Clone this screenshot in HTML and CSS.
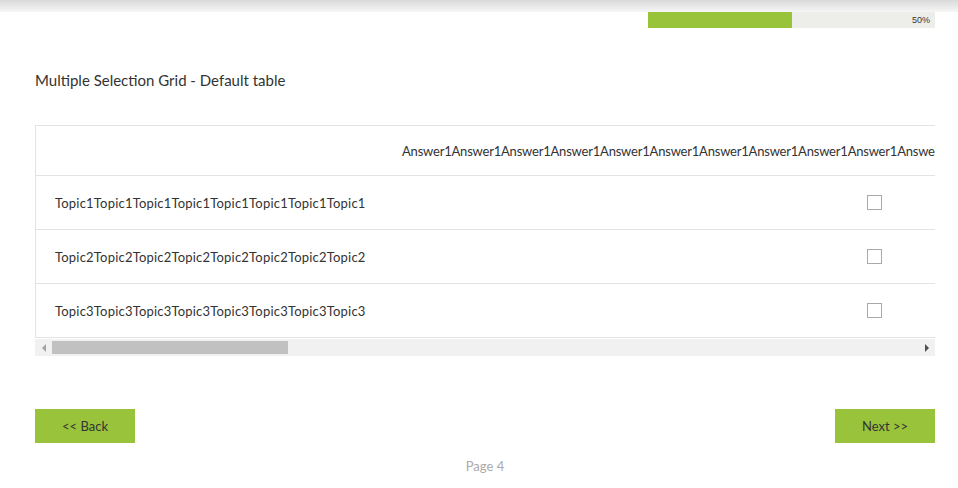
FILE: index.html
```html
<!DOCTYPE html>
<html>
<head>
  <meta charset="UTF-8">
  <title>Multiple Selection Grid</title>
  <link rel="stylesheet" href="styles.css">
</head>
<body>
  <div class="topbar"></div>

  <div class="progress-row">
    <div class="progress">
      <div class="progress-fill" style="width: 50%;"></div>
      <span class="progress-label">50%</span>
    </div>
  </div>

  <main class="survey">
    <h2 class="question-title">Multiple Selection Grid - Default table</h2>

    <div class="grid-scroll">
      <table class="grid">
        <thead>
          <tr>
            <th class="topic-col"></th>
            <th>Answer1Answer1Answer1Answer1Answer1Answer1Answer1Answer1Answer1Answer1Answer1Answer1Answer1Answer1Answer1Answer1Answer1Answer1Answer1</th>
            <th>Answer2Answer2Answer2Answer2Answer2Answer2Answer2Answer2Answer2Answer2Answer2Answer2Answer2Answer2Answer2Answer2Answer2Answer2Answer2</th>
            <th>Answer3Answer3Answer3Answer3Answer3Answer3Answer3Answer3Answer3Answer3Answer3Answer3Answer3Answer3Answer3Answer3Answer3Answer3Answer3</th>
          </tr>
        </thead>
        <tbody>
          <tr>
            <td class="topic">Topic1Topic1Topic1Topic1Topic1Topic1Topic1Topic1</td>
            <td><input type="checkbox" class="box"></td>
            <td><input type="checkbox" class="box"></td>
            <td><input type="checkbox" class="box"></td>
          </tr>
          <tr>
            <td class="topic">Topic2Topic2Topic2Topic2Topic2Topic2Topic2Topic2</td>
            <td><input type="checkbox" class="box"></td>
            <td><input type="checkbox" class="box"></td>
            <td><input type="checkbox" class="box"></td>
          </tr>
          <tr>
            <td class="topic">Topic3Topic3Topic3Topic3Topic3Topic3Topic3Topic3</td>
            <td><input type="checkbox" class="box"></td>
            <td><input type="checkbox" class="box"></td>
            <td><input type="checkbox" class="box"></td>
          </tr>
        </tbody>
      </table>
    </div>

    <!-- horizontal scrollbar of the grid -->
    <div class="hscroll">
      <span class="hscroll-arrow left"></span>
      <div class="hscroll-track">
        <div class="hscroll-thumb" style="width: 27.25%;"></div>
      </div>
      <span class="hscroll-arrow right"></span>
    </div>

    <div class="nav">
      <button class="nav-btn">&lt;&lt; Back</button>
      <button class="nav-btn">Next &gt;&gt;</button>
    </div>

    <div class="page-num">Page 4</div>
  </main>
</body>
</html>
```

FILE: styles.css
```css
body {
  margin: 0;
  font-family: Lato, "Open Sans", sans-serif;
  color: #333;
  background-color: white;
}

.topbar {
  height: 12px;
  background: linear-gradient(#d9d9d9, #f6f6f6);
}

.progress-row {
  display: flex;
  justify-content: flex-end;
  padding-right: 23px;
}

.progress {
  position: relative;
  width: 287px;
  height: 16px;
  background-color: #ededea;
}

.progress-fill {
  height: 100%;
  background-color: #9ac33c;
}

.progress-label {
  position: absolute;
  right: 5px;
  top: 0;
  font-family: "Liberation Sans", sans-serif;
  font-size: 9px;
  line-height: 16px;
  color: #333;
}

.survey {
  padding: 0 23px 0 35px;
}

.question-title {
  margin: 42px 0 35px;
  font-size: 15px;
  font-weight: normal;
  line-height: 20px;
}

.grid-scroll {
  overflow: hidden;
}

.grid {
  width: max-content;
  border-collapse: collapse;
  font-size: 13px;
}

.grid th,
.grid td {
  border: 1px solid #e3e3e3;
  border-right: none;
  white-space: nowrap;
}

.grid th {
  height: 49px;
  padding: 0 15px;
  font-weight: normal;
  text-align: center;
  letter-spacing: -0.2px;
}

.grid td {
  height: 53px;
  padding: 0 15px 0 19px;
  text-align: center;
}

.grid .topic-col,
.grid .topic {
  width: 332px;
  min-width: 332px;
  padding-left: 19px;
  padding-right: 0;
  text-align: left;
}

.grid .topic {
  letter-spacing: 0.2px;
}

.grid td + td,
.grid th + th {
  border-left: none;
}

.box {
  appearance: none;
  display: block;
  margin: 0 auto;
  width: 15px;
  height: 15px;
  border: 1px solid #aaa;
  background-color: white;
}

.hscroll {
  display: flex;
  align-items: center;
  height: 17px;
  margin-top: 1px;
  background-color: #f1f1f1;
}

.hscroll-arrow {
  width: 17px;
  height: 17px;
  display: flex;
  align-items: center;
  justify-content: center;
}

.hscroll-arrow::before {
  content: "";
  border-top: 4px solid transparent;
  border-bottom: 4px solid transparent;
}

.hscroll-arrow.left::before {
  border-right: 4px solid #a3a3a3;
}

.hscroll-arrow.right::before {
  border-left: 4px solid #505050;
}

.hscroll-track {
  flex: 1;
  height: 13px;
}

.hscroll-thumb {
  height: 100%;
  background-color: #c1c1c1;
}

.nav {
  display: flex;
  justify-content: space-between;
  margin-top: 53px;
}

.nav-btn {
  width: 100px;
  height: 34px;
  border: none;
  background-color: #9ac33c;
  color: #333;
  font-family: Lato, "Open Sans", sans-serif;
  font-size: 13px;
  cursor: pointer;
}

.page-num {
  margin-top: 15px;
  text-align: center;
  font-size: 13px;
  color: #aaa;
}
```
